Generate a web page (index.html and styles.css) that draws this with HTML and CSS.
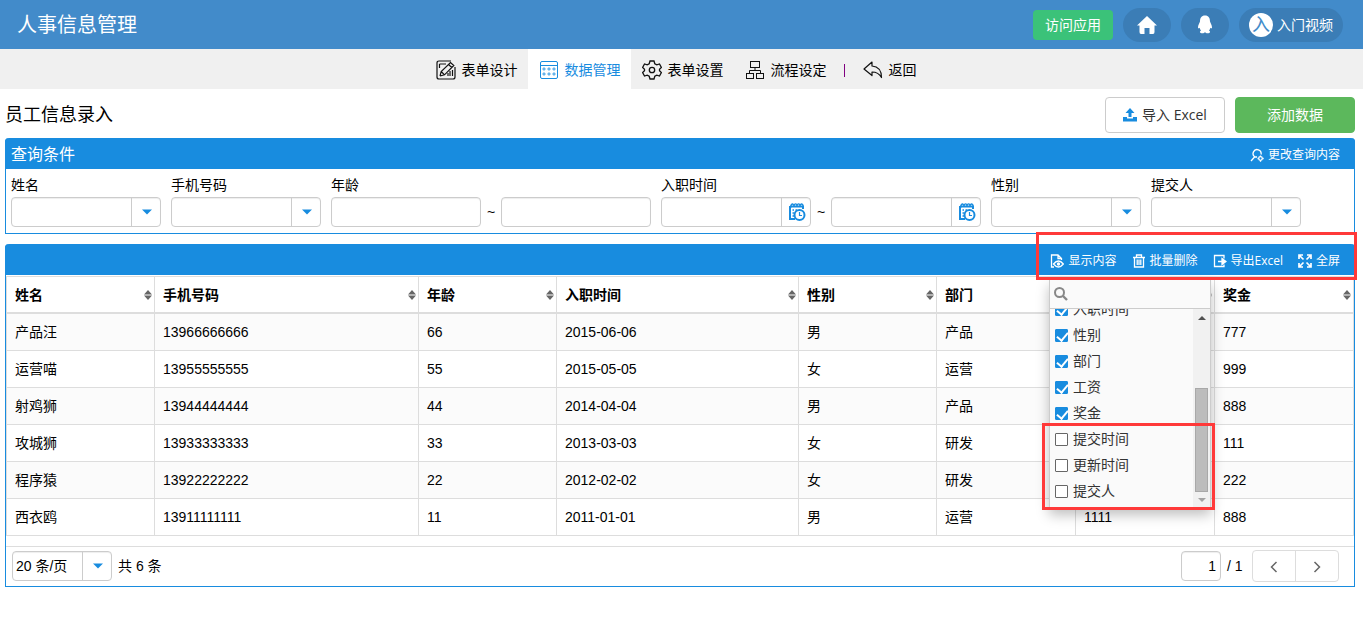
FILE: index.html
```html
<!DOCTYPE html>
<html lang="zh-CN">
<head>
<meta charset="utf-8">
<title>人事信息管理</title>
<link rel="stylesheet" href="styles.css">
</head>
<body>
<svg class="defs" aria-hidden="true">
  <symbol id="i-sort" viewBox="0 0 8 10"><path d="M0 4.500L4 0L8 4.500ZM0 5.500H8L4 10Z" fill="#666"/></symbol>
  <symbol id="i-caret" viewBox="0 0 10 6"><path d="M0 0.500H10L5 5.500Z" fill="currentColor"/></symbol>
  <symbol id="i-cal" viewBox="0 0 18 18"><path d="M2 3V16H7M2 3.500H15V6" fill="none" stroke="currentColor" stroke-width="2"/><path d="M3 4.500C2.500 0 6 0 6 3.500C6 0 9 0 9 3.500C9 0 12 0 12 3.500C12 0 15.500 0 15 4.500" fill="none" stroke="currentColor" stroke-width="1.300"/><path d="M4.500 7h1.500M4.500 10h1.500M4.500 13h1.500M7.500 7h1.500" stroke="currentColor" stroke-width="1.500"/><circle cx="11.500" cy="12" r="5" fill="#fff" stroke="currentColor" stroke-width="2"/><path d="M11.500 9V12.500H14" fill="none" stroke="currentColor" stroke-width="1.200"/></symbol>
</svg>

<header class="topbar">
  <h1 class="brand">人事信息管理</h1>
  <button class="visit" type="button">访问应用</button>
  <button class="pill" type="button" aria-label="首页"><svg width="22" height="20" viewBox="0 0 22 20"><path d="M11 1L1 10.500H3.500V17Q3.500 19 5 19H8.500V13H13.500V19H17Q18.500 19 18.500 17V10.500H21Z" fill="#fff"/></svg></button>
  <button class="pill" type="button" aria-label="客服"><svg width="16" height="19" viewBox="0 0 16 19"><path d="M8 0.500C4.500 0.500 3 3 3 6.500C2.500 8 1 10 1 12.500C1 13.500 1.600 13.700 2.600 12.800C2.800 14 3.300 14.800 4 15.600C2 16.800 3 18.300 5.300 18.300C6.600 18.300 7.500 17.800 8 17.300C8.500 17.800 9.400 18.300 10.700 18.300C13 18.300 14 16.800 12 15.600C12.700 14.800 13.200 14 13.400 12.800C14.400 13.700 15 13.500 15 12.500C15 10 13.500 8 13 6.500C13 3 11.500 0.500 8 0.500Z" fill="#fff"/></svg></button>
  <button class="pill user" type="button"><span class="avatar">入</span>入门视频</button>
</header>

<nav class="tabs">
  <a class="tab" href="#"><svg width="20" height="20" viewBox="0 0 20 20" fill="none" stroke="#111" stroke-width="1.200"><path d="M15 1H3Q1 1 1 3V17Q1 19 3 19H17Q19 19 19 17V7"/><path d="M4 16L5.200 11.500L14.500 2.500L17.800 5.500L8.500 14.800L4 16M5.200 11.500L8.500 14.800M12.500 4.500L15.800 7.500M3.500 4H10M3.500 4V8M12 16V13M14 16V11M16.500 16V10"/></svg>表单设计</a>
  <a class="tab on" href="#"><svg width="20" height="20" viewBox="0 0 20 20" fill="none" stroke="currentColor"><rect x="1.500" y="1.500" width="17" height="17" rx="1.500"/><path d="M1.500 5.500H18.500"/><g stroke-width="0.900"><circle cx="5" cy="9" r="1.100"/><circle cx="10" cy="9" r="1.100"/><circle cx="15" cy="9" r="1.100"/><circle cx="5" cy="14" r="1.100"/><circle cx="10" cy="14" r="1.100"/><circle cx="15" cy="14" r="1.100"/></g></svg>数据管理</a>
  <a class="tab" href="#"><svg width="20" height="20" viewBox="0 0 20 20" fill="none" stroke="#111" stroke-width="1.300"><path d="M8 1H12L12.800 3.700L14.800 4.800L17.500 4L19.400 7.400L17.500 9.200V10.800L19.400 12.600L17.500 16L14.800 15.200L12.800 16.300L12 19H8L7.200 16.300L5.200 15.200L2.500 16L0.600 12.600L2.500 10.800V9.200L0.600 7.400L2.500 4L5.200 4.800L7.200 3.700Z"/><circle cx="10" cy="10" r="2.700"/></svg>表单设置</a>
  <a class="tab" href="#"><svg width="20" height="20" viewBox="0 0 20 20" fill="none" stroke="#111"><rect x="5.500" y="1.500" width="9" height="6"/><rect x="1.500" y="13.500" width="7" height="5"/><rect x="11.500" y="13.500" width="7" height="5"/><path d="M10 7.500V10.500M4.500 13.500V10.500H15.500V13.500"/></svg>流程设定</a>
  <span class="sep"></span>
  <a class="tab" href="#"><svg width="20" height="20" viewBox="0 0 20 20" fill="none" stroke="#111" stroke-width="1.200" stroke-linejoin="round"><path d="M9 2L1 9L9 15.500V12C13 12 16 13 18.500 17.500C18.500 10 15 6.500 9 6Z"/></svg>返回</a>
</nav>

<main class="page">
  <div class="titlebar">
    <h2 class="title">员工信息录入</h2>
    <button class="btn import" type="button"><svg width="14" height="14" viewBox="0 0 14 14" fill="#188cdf"><path d="M7 0L2.500 5H5.500V9H8.500V5H11.500Z"/><path d="M0 9H4V10.500H10V9H14V13.500H0Z"/></svg>导入 Excel</button>
    <button class="btn add" type="button">添加数据</button>
  </div>

  <section class="panel">
    <div class="bar">
      <h3 class="bar-title">查询条件</h3>
      <button class="tool" type="button"><svg width="14" height="14" viewBox="0 0 14 14" fill="none" stroke="#fff" stroke-width="1.300"><path d="M5 9A4 4 0 1 1 11 6.500M5 8.500L1 13M5 9H7"/><circle cx="10.500" cy="10.500" r="1.800"/><path d="M10.500 7.500V8.700M10.500 12.300V13.700M7.500 10.500H8.700M12.300 10.500H13.700"/></svg>更改查询内容</button>
    </div>
    <form class="query">
      <div class="field"><label for="q1">姓名</label><div class="box"><select id="q1"><option></option></select><span class="addon"><svg width="10" height="6"><use href="#i-caret"/></svg></span></div></div>
      <div class="field"><label for="q2">手机号码</label><div class="box"><select id="q2"><option></option></select><span class="addon"><svg width="10" height="6"><use href="#i-caret"/></svg></span></div></div>
      <div class="field"><label for="q3">年龄</label><div class="range"><div class="box"><input id="q3" type="text"></div><span class="to">~</span><div class="box"><input type="text" aria-label="年龄上限"></div></div></div>
      <div class="field"><label for="q4">入职时间</label><div class="range"><div class="box"><input id="q4" type="text"><button class="addon" type="button" aria-label="选择日期"><svg width="18" height="18"><use href="#i-cal"/></svg></button></div><span class="to">~</span><div class="box"><input type="text" aria-label="入职时间止"><button class="addon" type="button" aria-label="选择日期"><svg width="18" height="18"><use href="#i-cal"/></svg></button></div></div></div>
      <div class="field"><label for="q5">性别</label><div class="box"><select id="q5"><option></option></select><span class="addon"><svg width="10" height="6"><use href="#i-caret"/></svg></span></div></div>
      <div class="field"><label for="q6">提交人</label><div class="box"><select id="q6"><option></option></select><span class="addon"><svg width="10" height="6"><use href="#i-caret"/></svg></span></div></div>
    </form>
  </section>

  <section class="panel data">
    <div class="bar tools">
      <button class="tool" type="button"><svg width="14" height="14" viewBox="0 0 14 14" fill="none" stroke="#fff" stroke-width="1.300"><path d="M4 13H1.500V1H8L11.500 4.500V6M8 1V4.500H11.500"/><path d="M3.500 10Q8.500 4 13.300 10Q8.500 16 3.500 10Z"/><circle cx="8.500" cy="10" r="1" fill="#fff"/></svg>显示内容</button>
      <button class="tool" type="button"><svg width="14" height="14" viewBox="0 0 14 14" fill="none" stroke="#fff" stroke-width="1.300"><path d="M1 3.500H13M4.500 3.500V1H9.500V3.500M2.500 3.500V13H11.500V3.500M5.200 5.500V11M7 5.500V11M8.800 5.500V11"/></svg>批量删除</button>
      <button class="tool" type="button"><svg width="14" height="14" viewBox="0 0 14 14" fill="none" stroke="#fff" stroke-width="1.300"><path d="M11 4.500V1.500H1.500V12.500H11V10.500M5 7.500H10"/><path d="M9 4.500L13 7.500L9 10.500Z" fill="#fff"/></svg>导出Excel</button>
      <button class="tool" type="button"><svg width="14" height="14" viewBox="0 0 14 14" fill="none" stroke="#fff" stroke-width="1.700"><path d="M1 5V1H5M9 1H13V5M13 9V13H9M5 13H1V9M1.500 1.500L5.500 5.500M12.500 1.500L8.500 5.500M12.500 12.500L8.500 8.500M1.500 12.500L5.500 8.500"/></svg>全屏</button>
    </div>
    <table class="grid">
      <colgroup><col class="c-name"><col class="c-phone"><col class="c-age"><col class="c-date"><col class="c-age"><col class="c-std"><col class="c-std"><col class="c-std"></colgroup>
      <thead><tr>
        <th><span class="th">姓名<svg width="8" height="10"><use href="#i-sort"/></svg></span></th>
        <th><span class="th">手机号码<svg width="8" height="10"><use href="#i-sort"/></svg></span></th>
        <th><span class="th">年龄<svg width="8" height="10"><use href="#i-sort"/></svg></span></th>
        <th><span class="th">入职时间<svg width="8" height="10"><use href="#i-sort"/></svg></span></th>
        <th><span class="th">性别<svg width="8" height="10"><use href="#i-sort"/></svg></span></th>
        <th><span class="th">部门<svg width="8" height="10"><use href="#i-sort"/></svg></span></th>
        <th><span class="th">工资<svg width="8" height="10"><use href="#i-sort"/></svg></span></th>
        <th><span class="th">奖金<svg width="8" height="10"><use href="#i-sort"/></svg></span></th>
      </tr></thead>
      <tbody>
        <tr><td>产品汪</td><td>13966666666</td><td>66</td><td>2015-06-06</td><td>男</td><td>产品</td><td></td><td>777</td></tr>
        <tr><td>运营喵</td><td>13955555555</td><td>55</td><td>2015-05-05</td><td>女</td><td>运营</td><td></td><td>999</td></tr>
        <tr><td>射鸡狮</td><td>13944444444</td><td>44</td><td>2014-04-04</td><td>男</td><td>产品</td><td></td><td>888</td></tr>
        <tr><td>攻城狮</td><td>13933333333</td><td>33</td><td>2013-03-03</td><td>女</td><td>研发</td><td></td><td>111</td></tr>
        <tr><td>程序猿</td><td>13922222222</td><td>22</td><td>2012-02-02</td><td>女</td><td>研发</td><td></td><td>222</td></tr>
        <tr><td>西衣鸥</td><td>13911111111</td><td>11</td><td>2011-01-01</td><td>男</td><td>运营</td><td>1111</td><td>888</td></tr>
      </tbody>
    </table>
    <div class="pager">
      <div class="box size"><select aria-label="每页条数"><option>20 条/页</option></select><span class="addon"><svg width="10" height="6"><use href="#i-caret"/></svg></span></div>
      <span class="total">共 6 条</span>
      <div class="box num"><input type="text" value="1" aria-label="页码"></div>
      <span class="of">/ 1</span>
      <div class="steps">
        <button type="button" aria-label="上一页"><svg width="8" height="12" viewBox="0 0 8 12"><path d="M6.500 1L1.500 6L6.500 11" fill="none" stroke="#666" stroke-width="1.500"/></svg></button>
        <button type="button" aria-label="下一页"><svg width="8" height="12" viewBox="0 0 8 12"><path d="M1.500 1L6.500 6L1.500 11" fill="none" stroke="#666" stroke-width="1.500"/></svg></button>
      </div>
    </div>

    <div class="menu">
      <label class="find"><svg width="14" height="14" viewBox="0 0 14 14" fill="none" stroke="#888" stroke-width="2"><circle cx="5.500" cy="5.500" r="4.500"/><path d="M9 9L13 13" stroke-width="2.400"/></svg><input type="text" aria-label="搜索"></label>
      <div class="menu-body">
        <div class="options">
          <label><input type="checkbox" checked>入职时间</label>
          <label><input type="checkbox" checked>性别</label>
          <label><input type="checkbox" checked>部门</label>
          <label><input type="checkbox" checked>工资</label>
          <label><input type="checkbox" checked>奖金</label>
          <label><input type="checkbox">提交时间</label>
          <label><input type="checkbox">更新时间</label>
          <label><input type="checkbox">提交人</label>
        </div>
        <div class="scroll">
          <svg width="8" height="4" viewBox="0 0 8 4"><path d="M0 4L4 0L8 4Z" fill="#505050"/></svg>
          <span class="thumb"></span>
          <svg width="8" height="4" viewBox="0 0 8 4"><path d="M0 0L4 4L8 0Z" fill="#a3a3a3"/></svg>
        </div>
      </div>
    </div>
    <div class="mark mark-tools"></div>
    <div class="mark mark-options"></div>
  </section>
</main>
</body>
</html>
```
FILE: styles.css
```css
* { box-sizing: border-box; }
body {
  margin: 0;
  background: #fff;
  color: #000;
  font: 14px/20px "Liberation Sans", "Noto Sans CJK SC", sans-serif;
}
svg { flex: none; display: block; }
.defs { position: absolute; width: 0; height: 0; }
button, input, select { font: inherit; color: inherit; margin: 0; }
button { padding: 0; border: 0; background: none; cursor: pointer; }
h1, h2, h3 { margin: 0; font-weight: 400; }
a { color: inherit; text-decoration: none; }

.topbar {
  display: flex;
  align-items: center;
  gap: 10px;
  height: 49px;
  padding: 0 20px 0 17px;
  background: #428bca;
  color: #fff;
}
.brand { flex: 1; font-size: 20px; line-height: 28px; }
.visit { width: 80px; height: 30px; border-radius: 4px; background: #3bc279; }
.pill {
  display: flex;
  align-items: center;
  justify-content: center;
  width: 48px;
  height: 34px;
  border-radius: 17px;
  background: #3b7db6;
}
.user { width: 104px; gap: 4px; }
.avatar {
  width: 24px;
  height: 24px;
  border-radius: 12px;
  background: #fff;
  color: #428bca;
  font-size: 18px;
  line-height: 24px;
}

.tabs {
  display: flex;
  justify-content: center;
  align-items: center;
  height: 40px;
  padding-right: 12px;
  background: #f0f0f0;
}
.tab { display: flex; align-items: center; gap: 6px; height: 40px; padding: 2px 10px 0 11px; }
.tab.on { background: #fff; color: #188cdf; }
.sep { width: 1px; height: 13px; margin: 2px 7px 0; background: #800080; }

.page { padding: 0 8px 0 5px; }
.titlebar { display: flex; align-items: center; gap: 10px; height: 49px; padding-top: 3px; }
.title { flex: 1; font-size: 18px; line-height: 26px; }
.btn {
  display: flex;
  align-items: center;
  justify-content: center;
  gap: 5px;
  width: 120px;
  height: 36px;
  border: 1px solid #ccc;
  border-radius: 4px;
  color: #333;
  font-family: "Open Sans", "Noto Sans CJK SC", sans-serif;
}
.add { border-color: #5cb85c; background: #5cb85c; color: #fff; }

.panel {
  position: relative;
  border: 1px solid #188cdf;
  border-top: 0;
  border-radius: 4px 4px 0 0;
}
.bar {
  display: flex;
  align-items: center;
  height: 31px;
  margin: 0 -1px;
  padding: 2px 15px 0 6px;
  border-radius: 4px 4px 0 0;
  background: #188cdf;
  color: #fff;
}
.bar-title { flex: 1; font-size: 16px; line-height: 24px; }
.tools { justify-content: flex-end; gap: 15px; }
.tool {
  display: flex;
  align-items: center;
  gap: 4px;
  font: 12px/18px "Open Sans", "Noto Sans CJK SC", sans-serif;
}

.query { display: flex; flex-wrap: wrap; gap: 10px; padding: 6px 5px; }
.field { display: flex; flex-direction: column; gap: 2px; }
.range { display: flex; align-items: center; }
.to { width: 20px; text-align: center; }
.box {
  position: relative;
  display: flex;
  width: 150px;
  height: 30px;
  overflow: hidden;
  border: 1px solid #ccc;
  border-radius: 4px;
  background: #fff;
  box-shadow: inset 0 1px 1px rgba(0, 0, 0, 0.07);
}
.box input, .box select {
  flex: 1;
  min-width: 0;
  padding: 0 4px;
  border: 0;
  outline: 0;
  background: none;
  appearance: none;
}
.addon {
  display: flex;
  align-items: center;
  justify-content: center;
  flex: none;
  width: 29px;
  padding-left: 2px;
  border-left: 1px solid #ccc;
  color: #188cdf;
  pointer-events: none;
}

.data { margin-top: 10px; }
.grid {
  width: 100%;
  margin-top: 1px;
  table-layout: fixed;
  border-collapse: separate;
  border-spacing: 0;
  border-top: 1px solid #ddd;
}
.c-name { width: 149px; }
.c-phone { width: 264px; }
.c-age { width: 138px; }
.c-date { width: 242px; }
.c-std { width: 139px; }
.grid th, .grid td {
  height: 37px;
  padding: 0 8px;
  border-right: 1px solid #ddd;
  border-bottom: 1px solid #ddd;
  text-align: left;
}
.grid th { padding-right: 2px; border-bottom-width: 2px; }
.grid th:first-child, .grid td:first-child { border-left: 1px solid #ddd; }
.grid tbody tr:nth-child(odd) { background: #fbfbfb; }
.th { display: flex; align-items: center; justify-content: space-between; }

.pager {
  display: flex;
  align-items: center;
  height: 40px;
  margin-top: 10px;
  padding: 0 15px 1px 6px;
  border-top: 1px solid #ddd;
}
.size { width: 100px; }
.box.size select { padding: 0 3px; }
.total { flex: 1; padding-left: 6px; }
.num { width: 40px; }
.num input { text-align: right; }
.of { width: 31px; padding-left: 6px; }
.steps { display: flex; height: 32px; border: 1px solid #ddd; border-radius: 4px; }
.steps button { display: flex; align-items: center; justify-content: center; width: 42px; padding-top: 2px; }
.steps button + button { width: 43px; border-left: 1px solid #ddd; }

.menu {
  position: absolute;
  top: 36px;
  right: 143px;
  width: 162px;
  border: 1px solid #ccc;
  border-top: 0;
  background: #fafafa;
  color: #333;
  box-shadow: 0 6px 12px rgba(0, 0, 0, 0.25);
}
.find { display: flex; align-items: center; gap: 6px; height: 29px; padding: 0 4px; border-bottom: 1px solid #ccc; }
.find input { flex: 1; min-width: 0; border: 0; outline: 0; background: none; }
.menu-body { display: flex; height: 199px; }
.options { display: flex; flex: 1; flex-direction: column; justify-content: flex-end; overflow: hidden; padding: 0 0 4px 5px; }
.options label { display: flex; flex: none; align-items: center; gap: 5px; height: 26px; }
.options input {
  position: relative;
  width: 13px;
  height: 13px;
  margin: 1px 0 0;
  appearance: none;
  border: 1px solid #666;
  border-radius: 1px;
  background: #fff;
}
.options input:checked { border-color: #188cdf; background: #188cdf; }
.options input:checked::after {
  content: "";
  position: absolute;
  left: 3px;
  top: 0;
  width: 5px;
  height: 9px;
  border: solid #fff;
  border-width: 0 2px 2px 0;
  transform: rotate(40deg);
}
.scroll {
  display: flex;
  flex-direction: column;
  align-items: center;
  width: 17px;
  padding: 7px 0 6px;
  background: #f1f1f1;
}
.thumb { width: 13px; height: 104px; margin: auto 0 6px; border: 1px solid #a8a8a8; background: #bcbcbc; }

.mark { position: absolute; border: 3px solid #ff3939; pointer-events: none; }
.mark-tools { top: -12px; right: -3px; width: 321px; height: 48px; }
.mark-options { top: 179px; right: 139px; width: 173px; height: 87px; }
```
